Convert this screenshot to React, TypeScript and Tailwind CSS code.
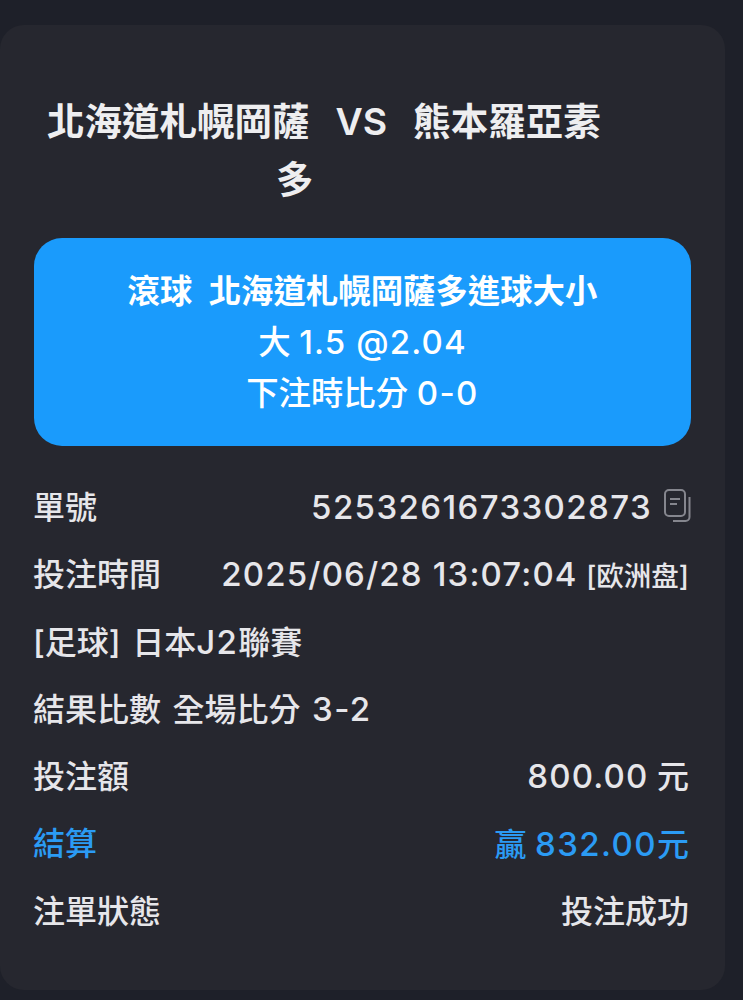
const font = "font-['Inter','Noto_Sans_CJK_TC',sans-serif]";

// latin runs are wider than Inter in the shot
const L = ({ children, tight }: { children: React.ReactNode; tight?: boolean }) => (
  <span className={`text-[33px] ${tight ? "tracking-[1.15px]" : "tracking-[1.4px]"}`}>{children}</span>
);

const Row = ({ left, right, blue }: { left: React.ReactNode; right?: React.ReactNode; blue?: boolean }) => (
  <div className={`-ml-px mr-[2px] flex h-[67.33px] items-center justify-between whitespace-nowrap text-[32px] font-medium leading-none ${blue ? "text-[#2b9bf4]" : "text-[#e6e6ea]"}`}>
    <span className="[word-spacing:3px]">{left}</span>
    {right && <span>{right}</span>}
  </div>
);

const CopyIcon = () => (
  <svg className="ml-3 mb-1 -mr-[2px]" width="27" height="33" viewBox="0 0 27 33" fill="none" stroke="#85868e" strokeWidth="2">
    <rect x="1" y="1" width="20" height="26" rx="4" />
    <path d="M6 10h10M6 15h7" />
    <path d="M25.5 8v20a4 4 0 0 1-4 4H9" />
  </svg>
);

export default function App() {
  return (
    <div className={`h-[1000px] w-[743px] overflow-hidden bg-[#1e2029] pt-[25px] ${font}`}>
      <div className="h-[965px] w-[725px] rounded-[24px] bg-[#26272f] px-[34px] pt-[68px]">
        <div className="whitespace-nowrap text-[37.5px] font-semibold leading-[58px] text-[#eeeef0]">
          <div className="flex pl-[13px]">
            <span>北海道札幌岡薩</span>
            <span className="ml-[26px]">VS</span>
            <span className="ml-[26px]">熊本羅亞素</span>
          </div>
          <div className="pl-[242px]">多</div>
        </div>

        <div className="mt-[29px] flex h-[208px] flex-col items-center justify-center rounded-[28px] bg-[#1a9bfc] text-[32.4px] font-medium leading-[51px] text-white">
          <div className="font-semibold">滾球&nbsp; 北海道札幌岡薩多進球大小</div>
          <div>大 <L tight>1.5 @2.04</L></div>
          <div>下注時比分 <L>0-0</L></div>
        </div>

        <div className="mt-[28px]">
          <Row
            left="單號"
            right={
              <span className="flex items-center">
                <L>5253261673302873</L>
                <CopyIcon />
              </span>
            }
          />
          <Row
            left="投注時間"
            right={
              <span>
                <L tight>2025/06/28 13:07:04</L> <span className="text-[27.5px]">[欧洲盘]</span>
              </span>
            }
          />
          <Row left={<>[足球] 日本<L>J2</L>聯賽</>} />
          <Row left={<>結果比數 全場比分 <L>3-2</L></>} />
          <Row left="投注額" right={<><L tight>800.00</L> 元</>} />
          <Row left="結算" right={<>贏 <L>832.00</L>元</>} blue />
          <Row left="注單狀態" right="投注成功" />
        </div>
      </div>
    </div>
  );
}
